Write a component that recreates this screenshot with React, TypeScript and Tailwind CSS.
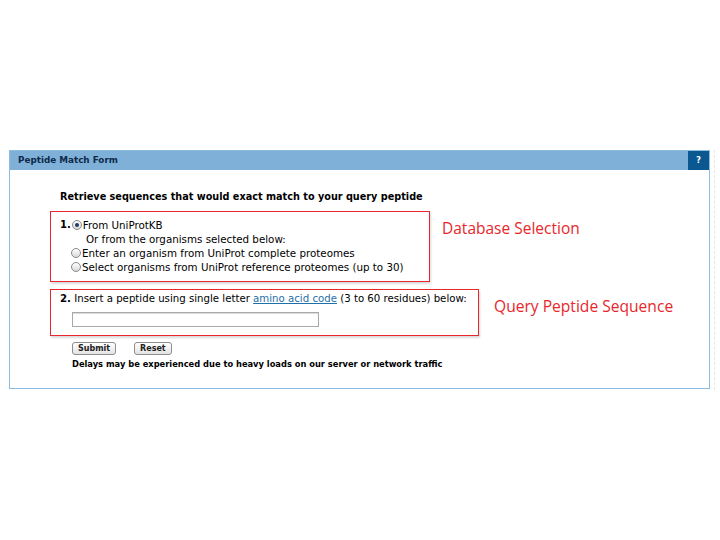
import React from "react";

function Radio({ checked }: { checked?: boolean }) {
  return (
    <span className="inline-flex h-[10px] w-[10px] shrink-0 items-center justify-center rounded-full border border-[#8a8a8a] bg-gradient-to-b from-[#ffffff] to-[#d9d9d9]">
      {checked && <span className="block h-[4px] w-[4px] rounded-full bg-[#1f3b63]" />}
    </span>
  );
}

export default function App() {
  return (
    <div className="relative h-[540px] w-[720px] bg-white pt-[150px] pl-[9px] font-['DejaVu_Sans',sans-serif] text-black">
      {/* faint scroll marks on the right edge */}
      <div className="absolute right-0 top-[150px] h-[240px] w-[6px] border-l border-dashed border-[#e6e6e6]" />

      <div className="w-[701px] border border-[#8bbde3] bg-white">
        <div className="flex h-[19px] items-center justify-between bg-[#7eb0d8]">
          <span className="pl-[8px] text-[8.8px] font-bold text-[#0e2a4a]">Peptide Match Form</span>
          <span className="flex h-[19px] w-[21px] items-center justify-center bg-[#0b5790] text-[8px] font-bold text-white">?</span>
        </div>

        <div className="pl-[40px] pt-[20px] pb-[18px]">
          <div className="pl-[10px] text-[9.7px] font-bold leading-[13px]">
            Retrieve sequences that would exact match to your query peptide
          </div>

          <div className="mt-[8px] flex items-start">
            <div className="h-[71px] w-[380px] border border-[#e8262b] pl-[9px] pt-[6px] text-[10.3px] leading-[14px] shadow-[1px_2px_2px_rgba(0,0,0,0.15)]">
              <div className="flex items-center">
                <span className="mr-[1px] text-[10px] font-bold">1.</span>
                <Radio checked />
                <span className="ml-[1px]">From UniProtKB</span>
              </div>
              <div className="pl-[26px]">Or from the organisms selected below:</div>
              <div className="flex items-center pl-[11px]">
                <Radio />
                <span className="ml-[1px]">Enter an organism from UniProt complete proteomes</span>
              </div>
              <div className="flex items-center pl-[11px]">
                <Radio />
                <span className="ml-[1px]">Select organisms from UniProt reference proteomes (up to 30)</span>
              </div>
            </div>
            <div className="ml-[12px] mt-[6px] font-['Open_Sans',sans-serif] text-[15.5px] text-[#e8262b]">
              Database Selection
            </div>
          </div>

          <div className="mt-[7px] flex items-start">
            <div className="h-[47px] w-[429px] border border-[#e8262b] pl-[9px] pt-[2px] text-[10.2px] leading-[14px] shadow-[1px_2px_2px_rgba(0,0,0,0.15)]">
              <div>
                <span className="font-bold">2.</span> Insert a peptide using single letter{" "}
                <span className="text-[#1f6fa8] underline">amino acid code</span> (3 to 60 residues) below:
              </div>
              <input
                type="text"
                className="mt-[6px] ml-[12px] block h-[15px] w-[247px] border border-[#a9a9a9] bg-white shadow-[inset_0_1px_1px_rgba(0,0,0,0.15)] outline-none"
              />
            </div>
            <div className="ml-[15px] mt-[6px] font-['Open_Sans',sans-serif] text-[15.6px] text-[#e8262b]">
              Query Peptide Sequence
            </div>
          </div>

          <div className="mt-[6px] flex items-center gap-[18px] pl-[22px]">
            <button className="h-[13px] rounded-[3px] border border-[#8e8e8e] bg-gradient-to-b from-[#ffffff] to-[#e3e3e3] px-[5px] text-[8px] font-bold leading-[11px] text-[#222]">
              Submit
            </button>
            <button className="h-[13px] rounded-[3px] border border-[#8e8e8e] bg-gradient-to-b from-[#ffffff] to-[#e3e3e3] px-[5px] text-[8px] font-bold leading-[11px] text-[#222]">
              Reset
            </button>
          </div>
          <div className="mt-[4px] pl-[22px] text-[8.3px] font-bold leading-[11px]">
            Delays may be experienced due to heavy loads on our server or network traffic
          </div>
        </div>
      </div>
    </div>
  );
}
